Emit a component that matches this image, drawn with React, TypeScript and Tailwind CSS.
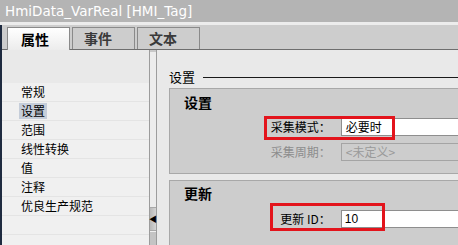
const navItems = ["常规", "设置", "范围", "线性转换", "值", "注释", "优良生产规范", "", ""];

export default function App() {
  return (
    <div className="w-[458px] h-[245px] overflow-hidden bg-[#e9e9e9] flex flex-col font-['Noto_Sans_CJK_SC',sans-serif] text-black">
      {/* title */}
      <div className="h-[22px] shrink-0 bg-[#b4b4b4] text-white text-[13.5px] leading-[22px] pl-[5px] font-['DejaVu_Sans',sans-serif]">
        HmiData_VarReal [HMI_Tag]
      </div>
      <div className="h-[3px] shrink-0 bg-[#ececec]" />

      <div className="flex-1 flex flex-col border-l-2 border-[#1f2b40] min-h-0">
        {/* tabs */}
        <div className="h-[25px] shrink-0 bg-[#cdcdcd] border-b border-[#6e6e6e] flex items-end pl-[5px] gap-[2px]">
          <div className="w-[63px] h-[23px] -mb-px border border-b-0 border-[#8a8a8a] bg-linear-to-b from-white to-[#ececec] text-[14px] font-bold leading-[22px] pl-[13px]">
            属性
          </div>
          <div className="w-[63px] h-[22px] border border-b-0 border-[#8a8a8a] bg-[#cdcdcd] text-[14px] font-bold text-[#3a3a3a] leading-[21px] pl-[11px]">
            事件
          </div>
          <div className="w-[63px] h-[22px] border border-b-0 border-[#8a8a8a] bg-[#cdcdcd] text-[14px] font-bold text-[#3a3a3a] leading-[21px] pl-[11px]">
            文本
          </div>
        </div>

        <div className="flex-1 flex min-h-0">
          {/* nav */}
          <div className="w-[147px] shrink-0 flex flex-col">
            <div className="h-[33px] shrink-0 bg-[#e9e9e9]" />
            <div className="flex-1 bg-[#f0f0f0]">
              {navItems.map((item, i) => (
                <div key={i} className="h-[19px] border-b border-[#e4e4e4] pl-[17px] flex items-center text-[12px] leading-[14px]">
                  <span className={`px-[2px] py-[1px] ${item === "设置" ? "bg-[#c5cdd9]" : ""}`}>{item}</span>
                </div>
              ))}
            </div>
          </div>

          {/* splitter */}
          <div className="w-[8px] shrink-0 flex flex-col border-x border-[#9c9c9c] bg-[#e2e2e2]">
            <div className="h-[157px] shrink-0 border-t-2 border-[#c8c8c8] bg-[#ececec]" />
            <div className="h-[24px] shrink-0 border-y border-[#a8a8a8] bg-linear-to-r from-[#b8b8b8] to-[#d4d4d4] flex items-center justify-center text-[8px] leading-none text-black">
              ◀
            </div>
            <div className="flex-1 bg-[#c4c4c4] border-t border-[#f0f0f0]" />
          </div>

          {/* content */}
          <div className="flex-1 overflow-hidden bg-[#e9e9e9] pl-[12px] pt-[20px]">
            <div className="h-[14px] flex items-center gap-[8px]">
              <span className="text-[13px] leading-[14px]">设置</span>
              <div className="flex-1 h-px bg-[#1a1a1a]" />
            </div>

            <div className="mt-[4px] w-[300px] h-[86px] border border-r-0 border-[#a8a8a8] bg-[#cdcdcd]">
              <div className="pl-[14px] pt-[5px] text-[14px] font-bold leading-[16px]">设置</div>
              <div className="relative mt-[8px] h-[18px] flex items-center">
                <div className="w-[163px] text-right text-[12px]">采集模式：</div>
                <div className="ml-[10px] w-[130px] h-[18px] bg-white border border-[#8e8e8e] pl-[4px] text-[12px] leading-[16px]">必要时</div>
                <div className="absolute left-[94px] top-[-2px] w-[131px] h-[24px] border-[3px] border-[#e3141c]" />
              </div>
              <div className="mt-[7px] h-[18px] flex items-center">
                <div className="w-[163px] text-right text-[12px] text-[#8c8c8c]">采集周期：</div>
                <div className="ml-[10px] w-[130px] h-[18px] border border-[#a4a4a4] pl-[4px] text-[12px] leading-[16px] text-[#9a9a9a]">&lt;未定义&gt;</div>
              </div>
            </div>

            <div className="mt-[6px] w-[300px] h-[80px] border border-r-0 border-[#a8a8a8] bg-[#cdcdcd]">
              <div className="pl-[14px] pt-[4px] text-[14px] font-bold leading-[16px]">更新</div>
              <div className="relative mt-[9px] h-[18px] flex items-center">
                <div className="w-[163px] text-right text-[12px]">更新 ID：</div>
                <div className="ml-[10px] w-[130px] h-[18px] bg-white border border-[#8e8e8e] pl-[3px] text-[12px] leading-[16px] font-['Liberation_Sans',sans-serif]">10</div>
                <div className="absolute left-[100px] top-[-7px] w-[115px] h-[28px] border-[3px] border-[#e3141c]" />
              </div>
            </div>
          </div>
        </div>
      </div>
    </div>
  );
}
